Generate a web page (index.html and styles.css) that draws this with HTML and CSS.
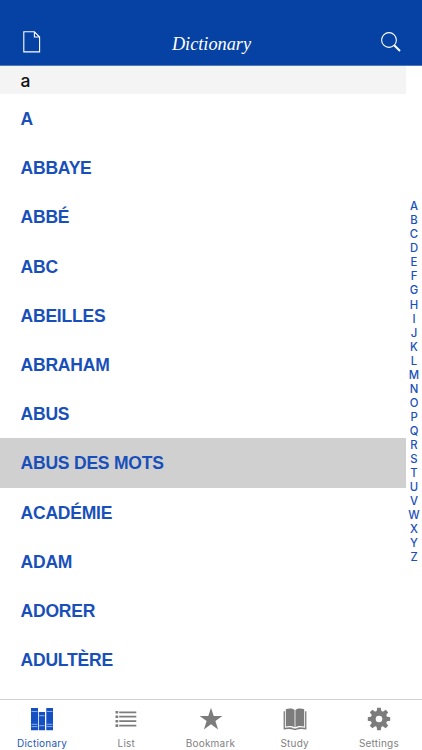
FILE: index.html
```html
<!DOCTYPE html>
<html lang="fr">
<head>
  <meta charset="UTF-8">
  <title>Dictionary</title>
  <link rel="stylesheet" href="styles.css">
</head>
<body>

  <header class="nav-bar">
    <svg class="nav-icon" width="18" height="22" viewBox="0 0 18 22">
      <path d="M.8.8H11.4L16.6 6V20.9H.8Z M11.4.8V6H16.6"/>
    </svg>
    <h1 class="nav-title">Dictionary</h1>
    <svg class="nav-icon" width="20" height="20" viewBox="0 0 20 20">
      <circle cx="8" cy="8" r="7.4"/>
      <path class="handle" d="M13.2 13.2L19 19"/>
    </svg>
  </header>

  <main class="content">
    <div class="word-list">
      <h2 class="section">a</h2>
      <ul>
        <li>A</li>
        <li>ABBAYE</li>
        <li>ABBÉ</li>
        <li>ABC</li>
        <li>ABEILLES</li>
        <li>ABRAHAM</li>
        <li>ABUS</li>
        <li class="selected">ABUS DES MOTS</li>
        <li>ACADÉMIE</li>
        <li>ADAM</li>
        <li>ADORER</li>
        <li>ADULTÈRE</li>
      </ul>
    </div>
    <nav class="index">
      <span>A</span><span>B</span><span>C</span><span>D</span><span>E</span><span>F</span><span>G</span>
      <span>H</span><span>I</span><span>J</span><span>K</span><span>L</span><span>M</span><span>N</span>
      <span>O</span><span>P</span><span>Q</span><span>R</span><span>S</span><span>T</span><span>U</span>
      <span>V</span><span>W</span><span>X</span><span>Y</span><span>Z</span>
    </nav>
  </main>

  <!-- tab bar -->
  <nav class="tab-bar">
    <div class="tab active">
      <svg width="24" height="24" viewBox="0 0 24 24">
        <path d="M1 1H8V23.3H1Z M8.8 5H15V23.3H8.8Z M16.3 1H23V23.3H16.3Z"/>
        <path class="cut" d="M1.5 4.5H7.5 M1.5 17.3H7.5 M1.5 19.6H7.5 M9.2 8.7H14.6 M9.2 18.7H14.6 M16.8 4.5H22.6 M16.8 17.3H22.6 M16.8 19.6H22.6"/>
      </svg>
      <span>Dictionary</span>
    </div>
    <div class="tab">
      <svg width="24" height="24" viewBox="0 0 24 24">
        <path d="M1.5 4H4.2V6.6H1.5Z M1.5 8.4H4.2V11H1.5Z M1.5 12.9H4.2V15.5H1.5Z M1.5 17.3H4.2V19.9H1.5Z M5.2 4.4H22.3V6.2H5.2Z M5.2 8.8H22.3V10.6H5.2Z M5.2 13.3H22.3V15.1H5.2Z M5.2 17.7H22.3V19.5H5.2Z"/>
      </svg>
      <span>List</span>
    </div>
    <div class="tab">
      <svg width="24" height="24" viewBox="0 0 24 24">
        <path d="M12 .8L14.7 9H23.4L16.4 14.1L19.1 22.4L12 17.3L4.9 22.4L7.6 14.1L.6 9H9.3Z"/>
      </svg>
      <span>Bookmark</span>
    </div>
    <div class="tab">
      <svg width="24" height="24" viewBox="0 0 24 24">
        <path d="M2.8 2.3C6 1.3 9.2 1.3 11.6 3V20.3C9 18.7 6 18.7 2.8 19.6Z M21.2 2.3C18 1.3 14.8 1.3 12.4 3V20.3C15 18.7 18 18.7 21.2 19.6Z"/>
        <path d="M.6 4.2H1.9V20.8C5.5 19.9 8.5 19.9 11 21.4H13C15.5 19.9 18.5 19.9 22.1 20.8V4.2H23.4V22.4C20 21.8 16.5 21.6 13.8 22.6C13.3 23.4 10.7 23.4 10.2 22.6C7.5 21.6 4 21.8 .6 22.4Z"/>
      </svg>
      <span>Study</span>
    </div>
    <div class="tab">
      <svg width="24" height="24" viewBox="0 0 24 24">
        <g transform="translate(12 12)">
          <path fill-rule="evenodd" d="M0-8.3A8.3 8.3 0 1 1 0 8.3A8.3 8.3 0 1 1 0-8.3Z M0-3.3A3.3 3.3 0 1 0 0 3.3A3.3 3.3 0 1 0 0-3.3Z"/>
          <path id="teeth" d="M-2.5-7L-1.8-11.2H1.8L2.5-7Z M-2.5 7L-1.8 11.2H1.8L2.5 7Z M-7-2.5L-11.2-1.8V1.8L-7 2.5Z M7-2.5L11.2-1.8V1.8L7 2.5Z"/>
          <use href="#teeth" transform="rotate(45)"/>
        </g>
      </svg>
      <span>Settings</span>
    </div>
  </nav>

</body>
</html>
```

FILE: styles.css
```css
* {
  box-sizing: border-box;
}

body {
  margin: 0;
  height: 750px;
  display: flex;
  flex-direction: column;
  overflow: hidden;
  background: #fff;
  font-family: "Liberation Sans", Arial, sans-serif;
}

.nav-bar {
  height: 66px;
  flex: none;
  display: flex;
  justify-content: space-between;
  align-items: flex-end;
  padding: 0 21px 12px 23px;
  background: #0642a4;
  border-bottom: 1px solid #4c78bc;
}

.nav-icon {
  fill: none;
  stroke: #fff;
  stroke-width: 1.1;
}

.nav-icon:last-child {
  margin-bottom: 1px;
}

.handle {
  stroke-width: 2;
}

.nav-title {
  margin: 0 0 -2px 1px;
  color: #fff;
  font: italic 18.3px/22px "Liberation Serif", "Times New Roman", serif;
}

.content {
  flex: 1;
  min-height: 0;
  display: flex;
}

.word-list {
  width: 406px;
}

.section {
  margin: 0;
  height: 28px;
  padding-left: 20.5px;
  background: #f4f4f4;
  color: #111;
  font: 500 17.5px/29px Inter, sans-serif;
}

.word-list ul {
  margin: 0;
  padding: 0;
  list-style: none;
}

.word-list li {
  height: 49.2px;
  padding-left: 20.5px;
  line-height: 51px;
  font-size: 17.5px;
  letter-spacing: -0.2px;
  font-weight: bold;
  color: #184fb9;
}

.word-list li.selected {
  background: #d0d0d0;
}

.index {
  width: 16px;
  padding-top: 133.3px;
  display: flex;
  flex-direction: column;
  align-items: center;
  font: 500 11.3px/14.04px Inter, sans-serif;
  color: #1a50ba;
}

.index span {
  height: 14.04px;
}

.tab-bar {
  height: 51px;
  flex: none;
  display: flex;
  border-top: 1px solid #d2d2d2;
  background: #fff;
}

.tab {
  flex: 1;
  display: flex;
  flex-direction: column;
  align-items: center;
  padding-top: 7px;
  color: #818181;
  font: 10px/14px Inter, sans-serif;
  letter-spacing: 0.2px;
}

.tab svg {
  fill: #7c7c7c;
  margin-bottom: 5px;
}

.tab:last-child {
  padding-right: 1px;
}

.tab.active {
  color: #2457bd;
}

.tab.active svg {
  fill: #1550c2;
}

.cut {
  stroke: #a9c4f2;
  stroke-width: 0.8;
}
```
